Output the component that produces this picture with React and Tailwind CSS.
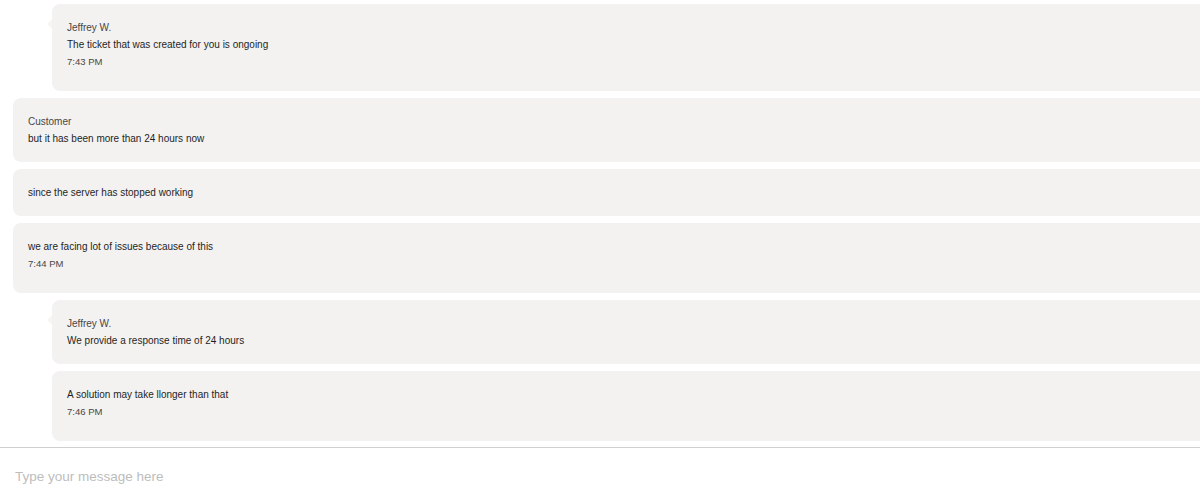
import React from 'react';

const messages = [
  { from: 'agent', name: 'Jeffrey W.', text: 'The ticket that was created for you is ongoing', time: '7:43 PM' },
  { from: 'customer', name: 'Customer', text: 'but it has been more than 24 hours now' },
  { from: 'customer', text: 'since the server has stopped working' },
  { from: 'customer', text: 'we are facing lot of issues because of this', time: '7:44 PM' },
  { from: 'agent', name: 'Jeffrey W.', text: 'We provide a response time of 24 hours' },
  { from: 'agent', text: 'A solution may take llonger than that', time: '7:46 PM' },
];

function Bubble({ msg }) {
  const agent = msg.from === 'agent';
  return (
    <div className={`relative ${agent ? 'ml-[52px]' : 'ml-[13px]'} -mr-4`}>
      {agent && msg.name && (
        <span className="absolute left-[-5px] top-[15px] w-0 h-0 border-y-[5px] border-y-transparent border-r-[5px] border-r-[#f7f6f5]" />
      )}
      <div className="bg-[#f3f2f1] rounded-lg py-[15px] px-[15px] text-[10px] leading-[17px] text-[#1f1f1f]">
        {msg.name && <div className="text-[#484644]">{msg.name}</div>}
        <div>{msg.text}</div>
        {msg.time && <div className="text-[9.5px] text-[#484644] mb-[6px]">{msg.time}</div>}
      </div>
    </div>
  );
}

export default function App() {
  return (
    <div className="w-[1200px] h-[489px] overflow-hidden bg-white flex flex-col font-['Liberation_Sans',Arial,sans-serif]">
      <div className="flex flex-col gap-[7px] pt-[4px] pb-[6px]">
        {messages.map((m, i) => (
          <Bubble key={i} msg={m} />
        ))}
      </div>
      <div className="border-t border-[#cfcfcf]">
        <input
          className="w-full px-[15px] pt-[19px] text-[13.5px] text-[#252423] placeholder:text-[#bdbdbd] outline-none bg-transparent"
          placeholder="Type your message here"
        />
      </div>
    </div>
  );
}
